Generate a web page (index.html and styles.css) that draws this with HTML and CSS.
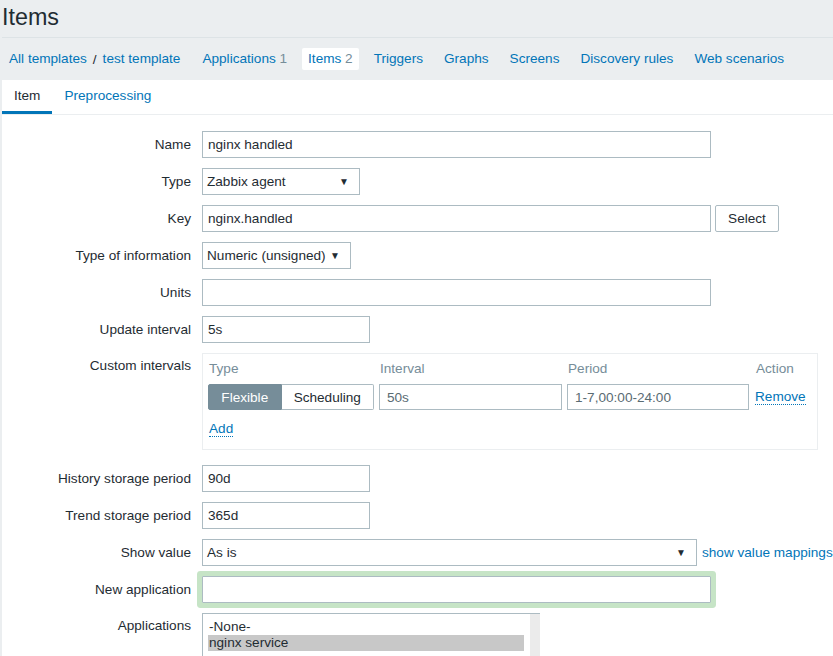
FILE: index.html
```html
<!DOCTYPE html>
<html>
<head>
<meta charset="utf-8">
<link rel="stylesheet" href="styles.css">
</head>
<body>
<div class="page">
  <header class="header">
    <h1 class="title">Items</h1>
  </header>
  <nav class="nav">
    <div class="crumbs">
      <a class="nav-link">All templates</a><span class="sep">/</span><a class="nav-link">test template</a>
    </div>
    <a class="nav-link">Applications <span class="count">1</span></a>
    <a class="nav-link active">Items <span class="count">2</span></a>
    <a class="nav-link">Triggers</a>
    <a class="nav-link">Graphs</a>
    <a class="nav-link">Screens</a>
    <a class="nav-link">Discovery rules</a>
    <a class="nav-link">Web scenarios</a>
  </nav>
  <main class="content">
    <div class="tabs">
      <span class="tab tab-active">Item</span>
      <span class="tab">Preprocessing</span>
    </div>
    <form class="form">
      <div class="row">
        <label class="label">Name</label>
        <div class="field"><input class="input w-wide" value="nginx handled"></div>
      </div>
      <div class="row">
        <label class="label">Type</label>
        <div class="field"><div class="select w-type"><span>Zabbix agent</span><span class="arrow">▼</span></div></div>
      </div>
      <div class="row">
        <label class="label">Key</label>
        <div class="field"><input class="input w-wide" value="nginx.handled"><button type="button" class="btn">Select</button></div>
      </div>
      <div class="row">
        <label class="label">Type of information</label>
        <div class="field"><div class="select w-info"><span>Numeric (unsigned)</span><span class="arrow">▼</span></div></div>
      </div>
      <div class="row">
        <label class="label">Units</label>
        <div class="field"><input class="input w-wide" value=""></div>
      </div>
      <div class="row">
        <label class="label">Update interval</label>
        <div class="field"><input class="input w-small" value="5s"></div>
      </div>
      <div class="row row-top row-custom">
        <label class="label label-top">Custom intervals</label>
        <div class="field">
          <div class="intervals">
            <div class="iv-head">
              <span class="c-type">Type</span>
              <span class="c-int">Interval</span>
              <span class="c-per">Period</span>
              <span class="c-act">Action</span>
            </div>
            <div class="iv-row">
              <div class="c-type seg">
                <span class="seg-btn seg-on">Flexible</span><span class="seg-btn">Scheduling</span>
              </div>
              <input class="input iv-input c-int" value="50s">
              <input class="input iv-input c-per" value="1-7,00:00-24:00">
              <a class="c-act dlink">Remove</a>
            </div>
            <div class="iv-add"><a class="dlink">Add</a></div>
          </div>
        </div>
      </div>
      <div class="row">
        <label class="label">History storage period</label>
        <div class="field"><input class="input w-small" value="90d"></div>
      </div>
      <div class="row">
        <label class="label">Trend storage period</label>
        <div class="field"><input class="input w-small" value="365d"></div>
      </div>
      <div class="row">
        <label class="label">Show value</label>
        <div class="field"><div class="select w-show"><span>As is</span><span class="arrow">▼</span></div><a class="link mapping">show value mappings</a></div>
      </div>
      <div class="row">
        <label class="label">New application</label>
        <div class="field"><input class="input w-wide glow" value=""></div>
      </div>
      <div class="row row-top">
        <label class="label">Applications</label>
        <div class="field">
          <div class="listbox">
            <div class="opts">
              <div class="opt">-None-</div>
              <div class="opt opt-sel">nginx service</div>
            </div>
            <div class="scroll"></div>
          </div>
        </div>
      </div>
    </form>
  </main>
</div>
</body>
</html>
```
FILE: styles.css
```css
* { box-sizing: border-box; }
html, body { margin: 0; padding: 0; }
body {
  background: #ebeef0;
  font-family: Arial, "Liberation Sans", sans-serif;
  font-size: 13.6px;
  color: #1f2c33;
  overflow: hidden;
}
.page { padding: 0 0 0 2px; }
.header {
  height: 38px;
  border-bottom: 1px solid #dde3e6;
  display: flex;
  align-items: center;
}
.title {
  margin: 0;
  font-size: 23.3px;
  font-weight: normal;
  line-height: 1;
  margin-top: -2px;
}
.nav {
  height: 42px;
  display: flex;
  align-items: center;
  gap: 9px;
  padding-left: 1px;
}
.crumbs { display: flex; align-items: center; margin-right: 1px; }
.sep { color: #1f2c33; }
.nav-link {
  color: #0275b8;
  text-decoration: none;
  padding: 4px 6px;
  line-height: 14px;
  border-radius: 2px;
}
.nav-link.active { background: #fff; }
.count { color: #768d99; }
.content {
  background: #fff;
  min-height: 600px;
}
.tabs {
  height: 35px;
  border-bottom: 1px solid #ebeef0;
  display: flex;
}
.tab {
  color: #0275b8;
  padding: 0 12px;
  height: 34px;
  line-height: 32px;
  border-bottom: 3px solid transparent;
}
.tab-active {
  color: #1f2c33;
  border-bottom-color: #0275b8;
}
.form {
  padding-top: 16px;
  display: flex;
  flex-direction: column;
  gap: 10px;
}
.row {
  display: grid;
  grid-template-columns: 189px 1fr;
  column-gap: 11px;
  align-items: center;
}
.row-top { align-items: start; }
.row-custom { margin-bottom: 5px; }
.label { text-align: right; }
.row-top .label { padding-top: 5px; }
.field { display: flex; align-items: center; }
.input {
  height: 27px;
  border: 1px solid #acbbc2;
  border-radius: 0;
  padding: 0 5px;
  font: inherit;
  color: #1f2c33;
  background: #fff;
  outline: none;
}
.w-wide { width: 509px; }
.w-small { width: 168px; }
.w-type { width: 158px; }
.w-info { width: 149px; }
.w-show { width: 495px; }
.select {
  height: 27px;
  border: 1px solid #acbbc2;
  display: flex;
  align-items: center;
  justify-content: space-between;
  padding: 0 10px 0 4px;
  background: #fff;
}
.arrow { font-size: 10px; color: #1f2c33; }
.btn {
  margin-left: 4px;
  height: 27px;
  width: 64px;
  border: 1px solid #acbbc2;
  border-radius: 2px;
  background: #fff;
  font: inherit;
  color: #1f2c33;
  padding: 0;
}
.link { color: #0275b8; text-decoration: none; }
.mapping { margin-left: 5px; white-space: nowrap; }
.glow { box-shadow: 0 0 0 5px #c6e4c6; border-radius: 1px; }
.intervals {
  width: 616px;
  height: 97px;
  border: 1px solid #ebeef0;
  padding: 3px 0 0 5px;
}
.iv-head, .iv-row {
  display: grid;
  grid-template-columns: 166px 183px 182px 51px;
  column-gap: 5px;
  align-items: center;
}
.iv-head { color: #768d99; height: 23px; padding-left: 1px; }
.iv-row { height: 26px; margin-top: 4px; }
.c-act { margin-left: 1px; }
.seg { display: flex; height: 26px; }
.seg-btn {
  border: 1px solid #acbbc2;
  display: flex;
  align-items: center;
  justify-content: center;
  height: 26px;
  padding: 0;
}
.seg-btn:first-child {
  width: 74px;
  background: #768d99;
  border-color: #768d99;
  color: #fff;
  border-radius: 2px 0 0 2px;
}
.seg-btn:last-child { width: 93px; border-left: none; border-radius: 0 2px 2px 0; }
.iv-input { height: 26px; width: 100%; padding-left: 7px; color: #5a6b73; }
.dlink {
  color: #0275b8;
  text-decoration: none;
  border-bottom: 1px dotted #0275b8;
  line-height: 14px;
  justify-self: start;
}
.iv-add { padding: 11px 0 0 1px; }
.listbox {
  width: 338px;
  height: 60px;
  border: 1px solid #acbbc2;
  border-right: none;
  border-bottom: none;
  display: flex;
}
.opts { flex: 1; padding: 5px 6px 0 5px; }
.opt { line-height: 16px; height: 16px; padding-left: 1px; }
.opt-sel { background: #c8c8c8; }
.scroll { width: 10px; background: #ebebeb; }
```
